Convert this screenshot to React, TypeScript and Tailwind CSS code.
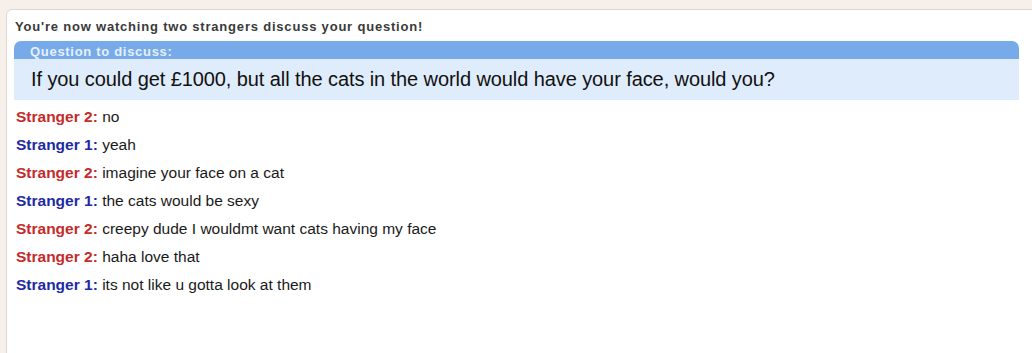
import React from "react";

const lines: { who: 1 | 2; text: string }[] = [
  { who: 2, text: "no" },
  { who: 1, text: "yeah" },
  { who: 2, text: "imagine your face on a cat" },
  { who: 1, text: "the cats would be sexy" },
  { who: 2, text: "creepy dude I wouldmt want cats having my face" },
  { who: 2, text: "haha love that" },
  { who: 1, text: "its not like u gotta look at them" },
];

export default function App() {
  return (
    <div className="w-[1032px] h-[353px] overflow-hidden bg-[#f7f0ea] pt-[9px] pl-[6px]" style={{ fontFamily: '"Liberation Sans", Arial, sans-serif' }}>
      <div className="h-[400px] w-[1040px] bg-white border border-[#ddd6cf] rounded-tl-[6px] pl-[7px] pr-[20px]">
        <div className="pt-[7px] h-[31px] text-[13px] font-bold text-[#3a3a3a] pl-[1px] tracking-[0.8px]">
          You're now watching two strangers discuss your question!
        </div>
        <div className="w-[1005px]">
          <div className="h-[18px] bg-[#76aae9] rounded-t-[7px] pl-[16px] pt-[2px] text-[13px] leading-[17px] font-bold text-[#e6f0fc] tracking-[0.7px]">
            Question to discuss:
          </div>
          <div className="h-[41px] bg-[#dfecfb] pl-[17px] text-[20px] leading-[41px] text-[#111] tracking-[-0.09px]">
            If you could get £1000, but all the cats in the world would have your face, would you?
          </div>
        </div>
        <div className="pt-[3px] pl-[2px]">
          {lines.map((l, i) => (
            <div key={i} className="h-[28px] leading-[28px] text-[15.5px] text-[#1a1a1a]">
              <span className={l.who === 2 ? "font-bold text-[#c52a2a]" : "font-bold text-[#1d2aa3]"}>
                Stranger {l.who}:
              </span>{" "}
              {l.text}
            </div>
          ))}
        </div>
      </div>
    </div>
  );
}
